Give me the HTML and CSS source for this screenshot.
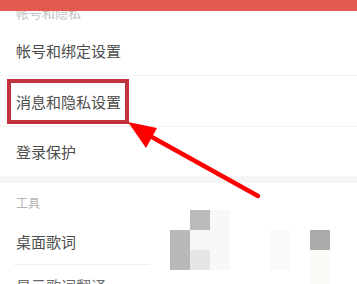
FILE: index.html
```html
<!DOCTYPE html>
<html lang="zh">
<head>
<meta charset="utf-8">
<link rel="stylesheet" href="styles.css">
</head>
<body>
<div class="page">
  <div class="topbar"></div>
  <div class="section">
    <div class="label label-first">帐号和隐私</div>
    <div class="item">帐号和绑定设置</div>
    <div class="item">消息和隐私设置</div>
    <div class="item last">登录保护</div>
  </div>
  <div class="band"></div>
  <div class="section">
    <div class="label label-tools">工具</div>
    <div class="item item-tools">桌面歌词</div>
    <div class="item item-tools item-end">显示歌词翻译</div>
  </div>

  <div class="highlight"></div>

  <div class="mosaic m1"></div>
  <div class="mosaic m2"></div>
  <div class="mosaic m3"></div>
  <div class="mosaic m4"></div>
  <div class="mosaic m5"></div>
  <div class="mosaic m6"></div>
  <div class="mosaic m7"></div>
  <div class="mosaic m8"></div>

  <svg class="arrow" width="357" height="284" viewBox="0 0 357 284">
    <line x1="150" y1="136" x2="258" y2="196" stroke="#f00" stroke-width="4.5" stroke-linecap="round"/>
    <polygon points="128,122 157,128 146,148" fill="#f00"/>
  </svg>
</div>
</body>
</html>
```
FILE: styles.css
```css
html, body {
  margin: 0;
  padding: 0;
  background: #fff;
}
.page {
  position: relative;
  width: 357px;
  height: 284px;
  overflow: hidden;
  font-family: "Noto Sans CJK SC", "Noto Sans", sans-serif;
}
.topbar {
  position: absolute;
  left: 0;
  top: 0;
  width: 357px;
  height: 11px;
  background: #e35a51;
  z-index: 2;
}
.section {
  display: flex;
  flex-direction: column;
}
.label {
  padding-left: 16px;
  font-size: 12px;
  line-height: 20px;
  color: #b4b4b4;
  box-sizing: border-box;
}
.label-first {
  font-size: 13px;
  height: 25px;
  padding-top: 3px;
  color: #c4c4c4;
}
.label-tools {
  height: 36px;
  padding-top: 10px;
}
.item {
  height: 51px;
  flex-shrink: 0;
  box-sizing: border-box;
  border-bottom: 1px solid #f3f3f3;
  padding-left: 16px;
  display: flex;
  align-items: center;
  font-size: 15px;
  color: #4d4d4d;
}
.item.last {
  height: 49px;
  border-bottom: none;
}
.item-tools {
  height: 46px;
  margin-left: 14px;
  padding-left: 2px;
  margin-right: 207px;
  border-bottom-color: #f0f0f0;
}
.item-end {
  height: 40px;
  border-bottom: none;
  color: #6a6a6a;
}
.band {
  height: 7px;
  background: #f5f5f5;
}
.highlight {
  position: absolute;
  left: 7px;
  top: 79px;
  width: 122px;
  height: 45px;
  box-sizing: border-box;
  border: 4px solid #c3333b;
}
.mosaic {
  position: absolute;
  width: 20px;
  height: 20px;
}
.m1 { left: 190px; top: 210px; background: #bababa; }
.m2 { left: 170px; top: 230px; height: 40px; background: #b8b8b8; }
.m3 { left: 190px; top: 230px; background: #f7f7f7; }
.m4 { left: 190px; top: 250px; background: #e6e6e6; }
.m5 { left: 210px; top: 210px; height: 60px; background: #f8f8f8; }
.m6 { left: 310px; top: 230px; background: #ababab; }
.m7 { left: 310px; top: 250px; height: 34px; background: #fafaf6; }
.m8 { left: 270px; top: 230px; height: 40px; background: #f9f9f9; }
.arrow {
  position: absolute;
  left: 0;
  top: 0;
  z-index: 3;
}
```
